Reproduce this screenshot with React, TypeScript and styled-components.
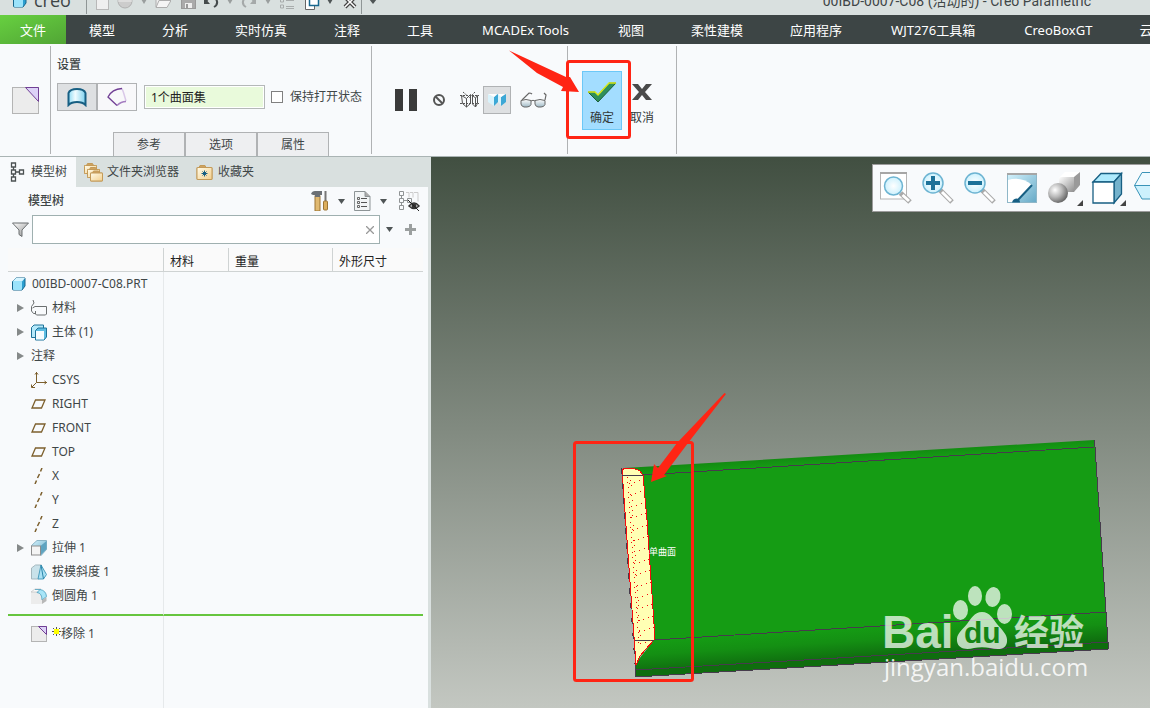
import React from 'react';
import styled, { createGlobalStyle } from 'styled-components';

const GlobalStyle = createGlobalStyle`
  * { box-sizing: border-box; }
  body {
    margin: 0;
    overflow: hidden;
    font-family: "Noto Sans", "Noto Sans CJK SC", sans-serif;
    font-size: 12px;
    line-height: 16px;
    color: #3f4647;
  }
  button, input { font: inherit; color: inherit; }
  button { border: 0; padding: 0; background: none; cursor: pointer; }
  svg { display: block; flex: none; }
`;

const Shell = styled.div`
  display: flex;
  flex-direction: column;
  height: 100vh;
  overflow: hidden;
  background: #f8fafc;
`;

/* ---------- title bar ---------- */
const TitleClip = styled.header`
  display: flex;
  align-items: flex-end;
  height: 15px;
  flex: none;
  overflow: hidden;
  background: #d9e0df;
`;
const TitleBar = styled.div`
  display: flex;
  align-items: center;
  flex: 1;
  height: 28px;
  padding-left: 12px;
`;
const Brand = styled.span`
  width: 52px;
  margin-left: 6px;
  padding-bottom: 2px;
  font-family: "Open Sans", sans-serif;
  font-size: 18px;
  line-height: 24px;
`;
const QuickTools = styled.div`
  display: flex;
  align-items: center;
  height: 26px;
  width: 275px;
  padding-left: 8px;
  border-left: 1px solid #8f9696;
`;
const QuickButton = styled.button<{ $w: number }>`
  display: flex;
  flex: none;
  justify-content: center;
  width: ${(p) => p.$w}px;
`;
const MoreTools = styled.button`
  display: flex;
  align-items: center;
  height: 26px;
  padding-left: 7px;
  border-left: 1px solid #8f9696;
`;
const WindowTitle = styled.h1`
  margin: 0 59px 0 auto;
  font-family: Roboto, "Noto Sans CJK SC", sans-serif;
  font-size: 14px;
  font-weight: 400;
  line-height: 20px;
  white-space: nowrap;
`;

/* ---------- menu ---------- */
const Menu = styled.nav`
  display: flex;
  flex: none;
  height: 29px;
  overflow: hidden;
  background: #3d4545;
`;
const MenuLink = styled.a<{ $file?: boolean; $roomy?: boolean }>`
  flex: none;
  padding: ${(p) => (p.$file ? '0 20px' : p.$roomy ? '0 26px 0 25px' : '0 24px 0 23px')};
  background: ${(p) => (p.$file ? 'linear-gradient(160deg, #67d040, #51a535)' : 'none')};
  color: #fff;
  font-size: 13px;
  line-height: 30px;
  white-space: nowrap;
  text-decoration: none;
`;

/* ---------- ribbon ---------- */
const Ribbon = styled.section`
  display: flex;
  flex: none;
  height: 113px;
  padding-top: 2px;
  border-bottom: 1px solid #aab4b4;
  background: #f8fafc;
`;
const RibbonGroup = styled.div<{ $w: number }>`
  position: relative;
  display: flex;
  flex: none;
  width: ${(p) => p.$w}px;
  &::after {
    content: "";
    width: 1px;
    height: 108px;
    margin-left: auto;
    background: #b0b2b4;
  }
`;
const FeatureButton = styled.button`
  height: 28px;
  margin: 40px 0 0 12px;
`;
const Settings = styled.div`
  display: flex;
  flex-direction: column;
  padding-left: 6px;
`;
const GroupTitle = styled.h2`
  margin: 11px 0 10px;
  font-size: 12px;
  font-weight: 500;
  line-height: 16px;
`;
const SettingsRow = styled.div`
  display: flex;
  align-items: center;
  height: 28px;
`;
const Toggle = styled.button<{ $on?: boolean }>`
  display: flex;
  align-items: center;
  justify-content: center;
  width: 40px;
  height: 28px;
  border: 1px solid #b0b2b4;
  background: ${(p) => (p.$on ? '#dee0e2' : '#f8f8fa')};
`;
const SurfaceInput = styled.input`
  width: 121px;
  height: 24px;
  margin: 0 6px 0 7px;
  padding: 0 6px;
  border: 1px solid #b4b8b8;
  outline: 0;
  background: #e9fadb;
  box-shadow: inset 0 0 0 1px #fff;
  color: #222;
`;
const CheckLabel = styled.label`
  display: flex;
  align-items: center;
  gap: 7px;
  white-space: nowrap;
`;
const Check = styled.input`
  appearance: none;
  width: 12px;
  height: 12px;
  margin: 0;
  border: 1px solid #808080;
  background: #fff;
`;
const RibbonTabs = styled.div`
  display: flex;
  margin: auto 0 0 56px;
`;
const RibbonTab = styled.button`
  width: 72px;
  height: 24px;
  border: 1px solid #b0b2b4;
  border-bottom: 0;
  background: #eeeff1;
`;
const ToolRow = styled.div`
  display: flex;
  align-items: center;
  gap: 5px;
  height: 28px;
  margin: 40px 0 0 22px;
`;
const RibbonTool = styled.button<{ $w: number; $on?: boolean }>`
  display: flex;
  align-items: center;
  justify-content: center;
  width: ${(p) => p.$w}px;
  height: 28px;
  border: 1px solid ${(p) => (p.$on ? '#b0b2b4' : 'transparent')};
  background: ${(p) => (p.$on ? '#dee0e2' : 'none')};
`;
const Decision = styled.button<{ $primary?: boolean }>`
  display: flex;
  flex-direction: column;
  align-items: center;
  justify-content: flex-end;
  width: 40px;
  height: 59px;
  margin: 25px 0 0 ${(p) => (p.$primary ? 14 : 0)}px;
  padding-bottom: 3px;
  gap: 7px;
  border: 1px solid ${(p) => (p.$primary ? '#6cc8f7' : 'transparent')};
  background: ${(p) => (p.$primary ? '#a3ddff' : 'none')};
  color: #33393a;
`;
const ConfirmMark = styled.svg`
  position: absolute;
  left: -60px;
  top: 2px;
  pointer-events: none;
`;

/* ---------- work area ---------- */
const Work = styled.main`
  display: flex;
  flex: 1;
  min-height: 0;
`;
const Sidebar = styled.aside`
  display: flex;
  flex-direction: column;
  flex: none;
  width: 431px;
  background: #f8fafc;
`;
const SideTabs = styled.div`
  display: flex;
  flex: none;
  height: 30px;
  background: #d9e0df;
`;
const SideTab = styled.button<{ $on?: boolean }>`
  display: flex;
  align-items: center;
  gap: ${(p) => (p.$on ? 6 : 4)}px;
  padding: 0 9px 0 8px;
  background: ${(p) => (p.$on ? '#f8fafc' : 'none')};
  white-space: nowrap;
`;
const Panel = styled.div`
  display: flex;
  flex-direction: column;
  flex: 1;
  min-height: 0;
  padding: 0 5px 0 8px;
  border-right: 3px solid #d9e0df;
`;
const PanelHead = styled.div`
  display: flex;
  align-items: center;
  height: 28px;
  padding-left: 20px;
`;
const PanelTitle = styled.h2`
  margin: 0 auto 0 0;
  font-size: 12px;
  font-weight: 500;
`;
const IconButton = styled.button<{ $w: number }>`
  display: flex;
  justify-content: center;
  width: ${(p) => p.$w}px;
`;
const SearchRow = styled.div`
  display: flex;
  align-items: center;
  height: 29px;
`;
const SearchBox = styled.div`
  display: flex;
  align-items: center;
  width: 348px;
  height: 29px;
  border: 1px solid #9fb0b0;
  background: #fff;
`;
const SearchInput = styled.input`
  flex: 1;
  height: 26px;
  border: 0;
  outline: 0;
  background: none;
`;
const TreeWrap = styled.div`
  flex: 1;
  min-height: 0;
  padding-top: 4px;
`;
const Tree = styled.table`
  width: 100%;
  height: 100%;
  border-collapse: separate;
  border-spacing: 0;
  table-layout: fixed;
`;
const HeadCell = styled.th<{ $w?: number }>`
  width: ${(p) => (p.$w ? `${p.$w}px` : 'auto')};
  height: 24px;
  padding: 5px 0 0 6px;
  border-bottom: 1px solid #cfd3d3;
  background: #fafafa;
  color: #222;
  font-weight: 400;
  text-align: left;
  & + & { border-left: 1px solid #cfd3d3; }
`;
const Cell = styled.td<{ $h?: number; $mark?: boolean }>`
  height: ${(p) => (p.$h ? `${p.$h}px` : 'auto')};
  padding: 0;
  border-bottom: ${(p) => (p.$mark ? '2px solid #67c53f' : '0')};
  &:nth-child(2) { border-left: 1px solid #e6e9eb; }
`;
const Node = styled.div<{ $root?: boolean }>`
  display: flex;
  align-items: center;
  padding-left: ${(p) => (p.$root ? 3 : 8)}px;
  white-space: nowrap;
`;
const Expander = styled.span`
  display: flex;
  width: 15px;
`;
const NodeIcon = styled.span`
  display: flex;
  width: 21px;
`;

/* ---------- graphics view ---------- */
const View = styled.section`
  position: relative;
  flex: 1;
  min-width: 0;
  overflow: hidden;
  background: linear-gradient(#414f41, #c3c7c1);
`;
const Scene = styled.svg`
  width: 100%;
  height: 100%;
`;
const ViewTools = styled.div`
  position: absolute;
  top: 7px;
  right: 0;
  display: flex;
  align-items: center;
  gap: 6px;
  width: 278px;
  height: 48px;
  padding-left: 7px;
  overflow: hidden;
  border: 1px solid #9c9c9c;
  border-right: 0;
  background: #f8fafc;
`;
const ViewTool = styled.button`
  flex: none;
  width: 36px;
  height: 34px;
`;

/* ---------- icons ---------- */
const Caret = ({ c = '#4f5556', w = 8 }: { c?: string; w?: number }) => (
  <svg width={w} height="5" viewBox="0 0 8 5" preserveAspectRatio="none"><path d="M0 0h8L4 5z" fill={c} /></svg>
);
const Cube = () => (
  <svg width="16" height="16" viewBox="0 0 16 16">
    <path d="M1.500 5.500L5 2h9v8l-3 4H2.500a1 1 0 0 1-1-1z" fill="#2c9fd0" stroke="#17678e" />
    <path d="M1.500 5.500L5 2h9l-3 3.500z" fill="#d6f5ff" />
    <rect x="2" y="5" width="9" height="9" rx="1" fill="#9be3fb" />
  </svg>
);
const PurpleFold = ({ s }: { s: number }) => (
  <svg width={s} height={s} viewBox={`0 0 ${s} ${s}`}>
    <rect x=".5" y=".5" width={s - 1} height={s - 1} fill="#ececec" stroke="#b4b4b4" />
    <path d={`M${Math.round(s / 2) - 1}.5 .5H${s - 1}.500V${Math.round(s / 2)}.500z`} fill="#dcd2f7" stroke="#713f95" />
  </svg>
);
const Lens = ({ kind }: { kind: 'fit' | 'in' | 'out' }) => {
  const fit = kind === 'fit';
  const cx = fit ? 13.5 : 11;
  const cy = fit ? 15 : 12;
  const r = fit ? 9 : 10;
  return (
    <svg width="36" height="34" viewBox="0 0 36 34">
      {fit && <><rect x=".5" y="2" width="26" height="26" fill="#fff" stroke="#b5b5b5" /><path d="M0 2h27" stroke="#a6a6a6" strokeWidth="2" /></>}
      <path d={`M${cx + 7} ${cy + 7}L30 31`} stroke="#a9a9a9" strokeWidth="5" />
      <path d={`M${cx + 9} ${cy + 9}L29 30`} stroke="#fff" strokeWidth="3" />
      <circle cx={cx} cy={cy} r={r} fill="url(#lensFill)" stroke="#6db4d2" strokeWidth="1.500" />
      {!fit && <path d={`M${cx - 7} ${cy}h14`} stroke="#1d7299" strokeWidth="4" />}
      {kind === 'in' && <path d={`M${cx} ${cy - 7}v14`} stroke="#1d7299" strokeWidth="4" />}
    </svg>
  );
};
const Defs = () => (
  <svg width="0" height="0" style={{ position: 'absolute' }}>
    <defs>
      <radialGradient id="lensFill"><stop offset="0" stopColor="#fff" /><stop offset="1" stopColor="#cdf1fd" /></radialGradient>
      <radialGradient id="ball" cx=".35" cy=".35" r=".7"><stop offset="0" stopColor="#fff" /><stop offset=".5" stopColor="#b9b9b9" /><stop offset="1" stopColor="#626262" /></radialGradient>
      <linearGradient id="box" x2="1" y2="1"><stop offset="0" stopColor="#fff" /><stop offset="1" stopColor="#8f8f8f" /></linearGradient>
      <linearGradient id="sky" x2="1" y2="1"><stop offset="0" stopColor="#d5f3fd" /><stop offset="1" stopColor="#66a9c6" /></linearGradient>
      <linearGradient id="gold" x2="1" y2="1"><stop offset="0" stopColor="#fffbe9" /><stop offset="1" stopColor="#f3cf8c" /></linearGradient>
      <linearGradient id="quilt"><stop offset="0" stopColor="#8fdcf5" /><stop offset=".4" stopColor="#f0fcff" /><stop offset="1" stopColor="#7ed1ee" /></linearGradient>
      <linearGradient id="lensGlass" x2="0" y2="1"><stop offset="0" stopColor="#fff" /><stop offset="1" stopColor="#9fb9c6" /></linearGradient>
    </defs>
  </svg>
);
const Folder = ({ x, y, w, h }: { x: number; y: number; w: number; h: number }) => (
  <g>
    <path d={`M${x} ${y + h}v-${h}h2l1-2h5l1 2h${w - 9}v${h}z`} fill="#cfa360" stroke="#c39a58" />
    <rect x={x} y={y} width={w} height={h} rx="1" fill="url(#gold)" stroke="#c39a58" />
  </g>
);

const icons: Record<string, React.ReactNode> = {
  material: (
    <svg width="17" height="16" viewBox="0 0 17 16" fill="none" stroke="#6b6f70">
      <path d="M2 0l1 3L.5 6.500v4.500l2 2.500H5M1.500 8L4 6.500h11.500v7.500l-1 1H5.500l-1-1V11" />
    </svg>
  ),
  body: (
    <svg width="17" height="17" viewBox="0 0 17 17" stroke="#1d7299">
      <path d="M.5 3.500L3 1h9.500v9l-3 3.500h-9z" fill="#b5e9fa" />
      <path d="M4.500 6.500L7 4h8.500v9L13 16H4.500z" fill="#5cbde2" />
      <path d="M5 7h8v8.500H5z" fill="#f4fcff" stroke="none" />
    </svg>
  ),
  csys: (
    <svg width="17" height="16" viewBox="0 0 17 16" fill="none" stroke="#7c5f2c">
      <path d="M5.500 0v10.500H16M5.500 10.500L1 15M4 2.500l1.500-2 1.500 2M13.500 9l2 1.500-2 1.500M.5 12.500v3H4" />
    </svg>
  ),
  plane: (
    <svg width="17" height="16" viewBox="0 0 17 16" fill="none" stroke="#7c5f2c" strokeWidth="1.300">
      <path d="M4.500 4h9.500l-3.500 8H1z" />
    </svg>
  ),
  axis: (
    <svg width="17" height="16" viewBox="0 0 17 16" stroke="#7c5f2c" strokeWidth="1.500">
      <path d="M11 0L9.500 3.500M8.500 6L6.500 10M5.500 12.500L4 16" />
    </svg>
  ),
  extrude: (
    <svg width="17" height="16" viewBox="0 0 17 16">
      <path d="M.5 5.500L6 .5h9.500v9l-5.500 6z" fill="url(#sky)" stroke="#8cb5c6" />
      <path d="M9.500 6l6-5v8l-6 6z" fill="#5fa4c1" />
      <rect x=".5" y="6" width="9" height="9" fill="#f4f4f4" stroke="#8d8d8d" />
    </svg>
  ),
  draft: (
    <svg width="17" height="16" viewBox="0 0 17 16">
      <path d="M.5 4l4-3h6v11l-3 3h-7z" fill="#c9e2ea" stroke="#a5b8bf" />
      <path d="M10 1l5.500 9.500-3 4.500H7z" fill="#a9e1f4" stroke="#4a9dbd" />
      <path d="M10 1l2.500 14" stroke="#2a86ab" />
    </svg>
  ),
  round: (
    <svg width="17" height="16" viewBox="0 0 17 16">
      <path d="M0 4h7q4 1 4 6v6H0z" fill="#ececec" />
      <path d="M0 4l4-3h6L7 4z" fill="#fafafa" stroke="#bbb" strokeWidth=".6" />
      <path d="M4 1.500h5q6 1 6.500 7L11 12Q11 5 6 4.500L9 1.500" fill="#a8e5f8" stroke="#4a9dbd" strokeWidth=".8" />
      <path d="M11 12l4.500-3v4L11 16z" fill="#b8b8b8" />
    </svg>
  ),
};

type TreeItem = { name: string; icon?: string; open?: boolean };
const items: TreeItem[] = [
  { name: '材料', icon: 'material', open: true },
  { name: '主体 (1)', icon: 'body', open: true },
  { name: '注释', open: true },
  { name: 'CSYS', icon: 'csys' },
  { name: 'RIGHT', icon: 'plane' },
  { name: 'FRONT', icon: 'plane' },
  { name: 'TOP', icon: 'plane' },
  { name: 'X', icon: 'axis' },
  { name: 'Y', icon: 'axis' },
  { name: 'Z', icon: 'axis' },
  { name: '拉伸 1', icon: 'extrude', open: true },
  { name: '拔模斜度 1', icon: 'draft' },
  { name: '倒圆角 1', icon: 'round' },
];
const menuItems = ['模型', '分析', '实时仿真', '注释', '工具', 'MCADEx Tools', '视图', '柔性建模', '应用程序', 'WJT276工具箱', 'CreoBoxGT', '云应用'];
const roomyItems = ['MCADEx Tools', 'WJT276工具箱'];

const Row = ({ h, mark, children }: { h?: number; mark?: boolean; children?: React.ReactNode }) => (
  <tr>
    <Cell $h={h} $mark={mark}>{children}</Cell>
    <Cell $mark={mark} /><Cell $mark={mark} /><Cell $mark={mark} />
  </tr>
);

/* Mesh points shown on the highlighted surface. */
const meshDots: [number, number][] = [];
for (let i = 0; i < 15; i++) {
  const y = 483 + i * 11.4;
  const x = 629 + i * 0.75;
  [[0, 0], [5, -1], [10, -3], [14, -4]].forEach(([dx, dy]) => meshDots.push([Math.round(x + dx), Math.round(y + dy)]));
}
for (let i = 0; i < 34; i++) {
  const y = 477 + i * 5;
  meshDots.push([Math.round(627 + i * 0.34), y]);
  if (i % 3) meshDots.push([Math.round(630 + i * 0.3), y - 2]);
}

const Model = () => (
  <Scene viewBox="431 157 719 551" preserveAspectRatio="xMinYMin slice" role="img" aria-label="00IBD-0007-C08">
    <defs>
      <linearGradient id="fillet" gradientUnits="userSpaceOnUse" x1="800" y1="631" x2="802" y2="661">
        <stop offset="0" stopColor="#159c14" /><stop offset=".45" stopColor="#148f13" /><stop offset="1" stopColor="#0f6e0f" />
      </linearGradient>
      <linearGradient id="topFillet" gradientUnits="userSpaceOnUse" x1="800" y1="457" x2="800.5" y2="465">
        <stop offset="0" stopColor="#138a12" /><stop offset="1" stopColor="#159c14" />
      </linearGradient>
    </defs>
    <path d="M624 468L1094 440V447L643 475z" fill="url(#topFillet)" />
    <path d="M641 475L1095 447L1106 612L654 640z" fill="#159c14" />
    <path d="M654 640L1106 612L1108 642L635 670V664z" fill="url(#fillet)" />
    <path d="M635 670L1108 642V649L635 677z" fill="#0f6d0e" />
    <g fill="none" stroke="#463c4c" shapeRendering="crispEdges">
      <path d="M643 475L1094 447M654 640L1106 612M635 670L1108 642M635 677L1108 649" />
      <path d="M1094 440L1095 447L1106 612L1108 642V649M635 664V677" />
    </g>
    <path d="M622 470L625 468H633L640 471L643 475L647 520L655 639L645 650L640 656L636 665z" fill="#ffffb4" stroke="#f40b0b" shapeRendering="crispEdges" />
    <path d="M622 475H643M635 641L654 640" stroke="#463c4c" shapeRendering="crispEdges" />
    <path d="M621 468L635 664" stroke="#463c4c" strokeDasharray="6 9" shapeRendering="crispEdges" />
    {meshDots.map(([x, y], i) => <rect key={i} x={x} y={y} width="1" height="1" fill="#f40b0b" />)}
    <text x="649" y="555" fill="#fff" fontSize="9" fontFamily="Noto Sans CJK SC, sans-serif">单曲面</text>
    <rect x="574.500" y="442.500" width="118" height="238" rx="2" fill="none" stroke="#ff2414" strokeWidth="3" />
    <path d="M724.500 393L726 394L688 443L664 475L667 476L651 482L654 464L658 468L677 443z" fill="#ff2414" />
    <g fill="#fff" fillOpacity=".72">
      <text x="882" y="648" fontSize="46" fontWeight="700" fontFamily="Liberation Sans, sans-serif">Bai</text>
      <ellipse cx="960.500" cy="610" rx="7.500" ry="10" />
      <ellipse cx="975" cy="596" rx="7" ry="10" />
      <ellipse cx="993" cy="597" rx="7.500" ry="10" transform="rotate(10 993 597)" />
      <ellipse cx="1004.500" cy="614" rx="7.500" ry="10" />
      <path d="M982 612C990 612 993 619 997 624C1002 630 1008 635 1007 642C1006 650 998 650 990 648C985 647 979 647 974 648C966 650 958 649 957 641C956 634 962 630 967 624C971 619 974 612 982 612z" />
      <text x="1014" y="645" fontSize="35" fontWeight="700" fontFamily="Noto Sans CJK SC, sans-serif">经验</text>
      <text x="884" y="676" fontSize="24" fillOpacity=".85" fontFamily="Open Sans, sans-serif">jingyan.baidu.com</text>
    </g>
    <text x="964" y="643" fontSize="30" fontWeight="700" fill="#148514" fontFamily="Liberation Sans, sans-serif">du</text>
  </Scene>
);

export default function App() {
  return (
    <Shell>
      <GlobalStyle />
      <Defs />
      <TitleClip>
        <TitleBar>
          <Cube />
          <Brand>creo</Brand>
          <QuickTools>
            <QuickButton $w={14} aria-label="新建"><svg width="13" height="18"><rect x=".5" y=".5" width="12" height="17" fill="#efefef" stroke="#b8b8b8" /></svg></QuickButton>
            <QuickButton $w={32} aria-label="发布"><svg width="16" height="18"><circle cx="8" cy="9" r="7" fill="#ccc" stroke="#b0b0b0" /><path d="M1 9h14" stroke="#eee" /></svg></QuickButton>
            <QuickButton $w={6} aria-label="更多"><Caret c="#9a9e9e" w={6} /></QuickButton>
            <QuickButton $w={32} aria-label="打开"><svg width="16" height="16"><path d="M1 14V3h5l1 2h6v3" fill="#eee" stroke="#adadad" /><path d="M1 14.500l3-7h12l-4 7z" fill="#f4f4f4" stroke="#adadad" /></svg></QuickButton>
            <QuickButton $w={18} aria-label="保存"><svg width="15" height="16"><rect x=".5" y=".5" width="14" height="15" fill="#aaa" stroke="#999" /><rect x="3" y="1" width="9" height="6" fill="#f2f2f2" /><rect x="4" y="10" width="7" height="5" fill="#eee" /><path d="M5 11h2v4H5z" fill="#999" /></svg></QuickButton>
            <QuickButton $w={28} aria-label="撤消"><svg width="16" height="14" fill="none" stroke="#454b4c" strokeWidth="2"><path d="M3 7q5-6 10-2 3 5-2 8" /><path d="M1 3v7h6z" fill="#454b4c" stroke="none" /></svg></QuickButton>
            <QuickButton $w={10} aria-label="撤消列表"><Caret c="#9a9e9e" w={6} /></QuickButton>
            <QuickButton $w={28} aria-label="重做"><svg width="16" height="14" fill="none" stroke="#a5a9a9" strokeWidth="2"><path d="M13 7Q8 1 3 5q-3 5 2 8" /><path d="M15 3v7H9z" fill="#a5a9a9" stroke="none" /></svg></QuickButton>
            <QuickButton $w={10} aria-label="重做列表"><Caret c="#9a9e9e" w={6} /></QuickButton>
            <QuickButton $w={28} aria-label="重新生成"><svg width="15" height="18" fill="none" stroke="#a8acac"><path d="M6 2.500h8M6 8.500h8M6 14.500h8M6 16.500h8" /><path d="M.5 1h3v3h-3zM.5 7h3v3h-3zM.5 13h3v3h-3z" /></svg></QuickButton>
            <QuickButton $w={22} aria-label="窗口"><svg width="15" height="20"><path d="M.5 8.500h9v10h-9z" fill="#fff" stroke="#666" /><path d="M4.500 3.500h9v11h-9z" fill="#fff" stroke="#17678e" strokeWidth="1.500" /></svg></QuickButton>
            <QuickButton $w={14} aria-label="窗口列表"><Caret w={6} /></QuickButton>
            <QuickButton $w={26} aria-label="关闭"><svg width="14" height="16"><path d="M2 4l10 10M12 4L2 14" stroke="#444" strokeWidth="4" /><path d="M2 4l10 10M12 4L2 14" stroke="#fff" strokeWidth="1.500" /></svg></QuickButton>
          </QuickTools>
          <MoreTools aria-label="自定义"><Caret w={8} /></MoreTools>
          <WindowTitle>00IBD-0007-C08 (活动的) - Creo Parametric</WindowTitle>
        </TitleBar>
      </TitleClip>

      <Menu>
        <MenuLink href="#file" $file>文件</MenuLink>
        {menuItems.map((m) => <MenuLink key={m} href={`#${m}`} $roomy={roomyItems.includes(m)}>{m}</MenuLink>)}
      </Menu>

      <Ribbon>
        <RibbonGroup $w={51}>
          <FeatureButton aria-label="移除"><PurpleFold s={27} /></FeatureButton>
        </RibbonGroup>
        <RibbonGroup $w={321}>
          <Settings>
            <GroupTitle>设置</GroupTitle>
            <SettingsRow>
              <Toggle $on aria-label="移除曲面">
                <svg width="20" height="20" viewBox="0 0 20 20"><path d="M1.500 18V6Q3 2 10 2t8.500 4v12q-3-3-8.500-3t-8.500 3z" fill="url(#quilt)" stroke="#175f83" strokeWidth="2" /></svg>
              </Toggle>
              <Toggle aria-label="移除链">
                <svg width="20" height="20" viewBox="0 0 20 20" fill="#fff"><path d="M15 1.500l1.500 4L19 14" stroke="#d9c8e8" strokeWidth="1.500" /><path d="M10 18.500L1 10Q5 2 15 1.500" stroke="#713f95" strokeWidth="1.300" fill="none" /><path d="M10 18.500q4-4 9-4" stroke="#a47cc0" strokeWidth="1.300" fill="none" /></svg>
              </Toggle>
              <SurfaceInput aria-label="曲面集" defaultValue="1个曲面集" />
              <CheckLabel><Check type="checkbox" />保持打开状态</CheckLabel>
            </SettingsRow>
            <RibbonTabs>
              <RibbonTab>参考</RibbonTab><RibbonTab>选项</RibbonTab><RibbonTab>属性</RibbonTab>
            </RibbonTabs>
          </Settings>
        </RibbonGroup>
        <RibbonGroup $w={196}>
          <ToolRow>
            <RibbonTool $w={24} aria-label="暂停"><svg width="24" height="22"><path d="M1 0h8v22H1zM15 0h8v22h-8z" fill="#3a3a3a" /></svg></RibbonTool>
            <RibbonTool $w={32} aria-label="无预览"><svg width="12" height="12" fill="none" stroke="#555" strokeWidth="2"><circle cx="6" cy="6" r="5" /><path d="M2.500 2.500l7 7" /></svg></RibbonTool>
            <RibbonTool $w={18} aria-label="分离"><svg width="19" height="18" viewBox="0 0 19 18" fill="none" stroke="#555"><path d="M1.500 4.500l5 3v8.500l-4-3.500zM6.500 7.500l4-4v9l-4 3.500M12.500 4.500v8.500l3 3v-9zM15.500 7l2-2.500v8l-2 3.500" /><path d="M0 4.500h19M3 1l4 3.500M15 1L9 7M0 12.500h19" strokeDasharray="2 1" /></svg></RibbonTool>
            <RibbonTool $w={28} $on aria-label="连接"><svg width="20" height="16" viewBox="0 0 20 16"><path d="M1 2l6 3v9l-6-4zM11 2l4 3v9l-4-4z" fill="#d9f3fc" /><path d="M7 5l4-3v8l-4 4zM14 5l5-3v8l-5 4z" fill="#3da8d6" /><path d="M1 2h5l4 0-3 3zM11 2h7l-4 3z" fill="#fff" /></svg></RibbonTool>
            <RibbonTool $w={34} aria-label="验证"><svg width="27" height="16" viewBox="0 0 27 16" stroke="#666" fill="url(#lensGlass)"><path d="M2 8L9 1q2 0 3 1M25 8l1-5-2-2" fill="none" strokeWidth="1.200" /><path d="M1 8.500q5-2 10 0v4q-1 2.500-4 2.500H4q-3-1-3-3zM15 8.500q5-2 10 0v4q-1 2.500-4 2.500h-3q-3-1-3-3zM11 9q2-1.500 4 0" /></svg></RibbonTool>
          </ToolRow>
        </RibbonGroup>
        <RibbonGroup $w={109}>
          <Decision $primary>
            <svg width="30" height="22" viewBox="0 0 30 22"><path d="M1 11h7l3 3L22 2h7L11 21z" fill="#2f8f5b" stroke="#1d5f3c" /><path d="M1 11h7l3 3L22 2h7" fill="none" stroke="#d8ea1a" strokeWidth="1.500" /></svg>
            确定
          </Decision>
          <Decision>
            <svg width="20" height="22" viewBox="0 0 20 22"><path d="M0 3h6l4 5 4-5h6l-7 8 7 8h-6l-4-5-4 5H0l7-8z" fill="#4a4a4a" /></svg>
            取消
          </Decision>
          <ConfirmMark width="126" height="94" viewBox="508 48 126 94">
            <rect x="567.500" y="61.500" width="62" height="76" rx="2" fill="none" stroke="#ff2414" strokeWidth="3" />
            <path d="M509 50.500L566 77L570 77L579 92L561 91L563 87L537 73z" fill="#ff2414" />
          </ConfirmMark>
        </RibbonGroup>
      </Ribbon>

      <Work>
        <Sidebar>
          <SideTabs>
            <SideTab $on>
              <svg width="17" height="20" viewBox="0 0 17 20" fill="none" stroke="#4b5152" strokeWidth="1.300"><path d="M3.500 1h4v4h-4zM3.500 8h4v4h-4zM3.500 15h4v4h-4zM11.500 8h4v4h-4zM5.500 5v3M5.500 12v3M7.500 10h4" /></svg>
              模型树
            </SideTab>
            <SideTab>
              <svg width="19" height="20" viewBox="0 0 19 20"><Folder x={.5} y={3.5} w={12} h={8} /><Folder x={3.500} y={7.500} w={12} h={8} /><Folder x={6.500} y={11} w={12} h={8} /></svg>
              文件夹浏览器
            </SideTab>
            <SideTab>
              <svg width="18" height="18" viewBox="0 0 18 18"><Folder x={1} y={4.500} w={15} h={12} /><path d="M8.500 7.500v6M5.500 10.500h6M6.500 8.500l4 4M10.500 8.500l-4 4" stroke="#175f83" /></svg>
              收藏夹
            </SideTab>
          </SideTabs>
          <Panel>
            <PanelHead>
              <PanelTitle>模型树</PanelTitle>
              <IconButton $w={18} aria-label="设置">
                <svg width="18" height="20" viewBox="0 0 18 20"><rect x="4" y="5" width="5" height="15" fill="#e0b971" stroke="#9c7535" /><path d="M0 3q1-3 4-3h7v4H9v2H4V4H2z" fill="#6b7075" /><path d="M14.500 0v10" stroke="#777" strokeWidth="2" /><rect x="12.500" y="10" width="4" height="9" rx="1" fill="#dcae5d" stroke="#9c7535" /></svg>
              </IconButton>
              <IconButton $w={24} aria-label="设置列表"><Caret w={7} /></IconButton>
              <IconButton $w={18} aria-label="显示">
                <svg width="17" height="20" viewBox="0 0 17 20"><path d="M.5.5H11l5 5v14H.5z" fill="#f2f5f6" stroke="#8d9496" /><path d="M11 .5v5h5" fill="#aaa" stroke="#8d9496" /><path d="M7 7.500h6M7 11.500h6M7 15.500h6" stroke="#555" /><path d="M3.500 6.500h2v2h-2zM3.500 10.500h2v2h-2zM3.500 14.500h2v2h-2z" fill="none" stroke="#666" /></svg>
              </IconButton>
              <IconButton $w={24} aria-label="显示列表"><Caret w={7} /></IconButton>
              <IconButton $w={28} aria-label="隐藏">
                <svg width="22" height="20" viewBox="0 0 22 20" fill="none" stroke="#8f9394"><path d="M1.500.5h4v4h-4zM1.500 7.500h4v4h-4zM1.500 14.500h4v4h-4zM9.500 7.500h4v4h-4zM3.500 4.500v3M3.500 11.500v3M5.500 9.500h4" /><path d="M8 1.500h3v5M12 1.500h3v5M16 1.500h4v9" stroke="#ccc" /><path d="M11 15q5-6 10 0-5 5-10 0z" fill="#fff" stroke="#333" strokeWidth="1.500" /><circle cx="16" cy="15" r="2.500" fill="#333" stroke="none" /><path d="M10 9l11 11" stroke="#222" /></svg>
              </IconButton>
            </PanelHead>
            <SearchRow>
              <IconButton $w={24} aria-label="过滤器">
                <svg width="17" height="16" viewBox="0 0 17 16"><path d="M.5 1h16L10 8v6.500L7 12.500V8z" fill="url(#box)" stroke="#6b6f70" /></svg>
              </IconButton>
              <SearchBox>
                <SearchInput aria-label="搜索模型树" />
                <IconButton $w={18} aria-label="清除"><svg width="8" height="8" stroke="#999" strokeWidth="1.300"><path d="M0 0l8 8M8 0L0 8" /></svg></IconButton>
              </SearchBox>
              <IconButton $w={18} aria-label="搜索选项"><Caret w={7} /></IconButton>
              <IconButton $w={24} aria-label="添加"><svg width="11" height="11"><path d="M4 0h3v4h4v3H7v4H4V7H0V4h4z" fill="#9b9f9f" /></svg></IconButton>
            </SearchRow>
            <TreeWrap>
              <Tree>
                <thead>
                  <tr><HeadCell $w={155} aria-label="名称" /><HeadCell $w={65}>材料</HeadCell><HeadCell $w={104}>重量</HeadCell><HeadCell>外形尺寸</HeadCell></tr>
                </thead>
                <tbody>
                  <Row h={24}><Node $root><NodeIcon><Cube /></NodeIcon>00IBD-0007-C08.PRT</Node></Row>
                  {items.map((it) => (
                    <Row key={it.name} h={24}>
                      <Node>
                        <Expander>{it.open && <svg width="8" height="10"><path d="M1 1l7 4-7 4z" fill="#858989" /></svg>}</Expander>
                        {it.icon && <NodeIcon>{icons[it.icon]}</NodeIcon>}
                        {it.name}
                      </Node>
                    </Row>
                  ))}
                  <Row h={8} mark />
                  <Row h={36}>
                    <Node><Expander /><NodeIcon><PurpleFold s={16} /></NodeIcon>
                      <svg width="9" height="14" viewBox="0 0 9 14"><path d="M4.500 0v9M0 4.500h9M1 1l7 7M8 1L1 8" stroke="#555" /><rect x="2" y="2" width="5" height="5" fill="#ff0" /></svg>
                      移除 1
                    </Node>
                  </Row>
                  <Row />
                </tbody>
              </Tree>
            </TreeWrap>
          </Panel>
        </Sidebar>

        <View>
          <Model />
          <ViewTools>
            <ViewTool aria-label="重新调整"><Lens kind="fit" /></ViewTool>
            <ViewTool aria-label="放大"><Lens kind="in" /></ViewTool>
            <ViewTool aria-label="缩小"><Lens kind="out" /></ViewTool>
            <ViewTool aria-label="重画">
              <svg width="36" height="34" viewBox="0 0 36 34"><rect x="1.500" y="2.500" width="29" height="29" fill="url(#sky)" stroke="#8fb7c8" /><path d="M2 9q13-4 24 5L11 31H2z" fill="#fff" /><path d="M26 14L11 30" stroke="#175f83" strokeWidth="2" /><path d="M6 31.500q1-4 5-4 3 1 3 4z" fill="#175f83" /><path d="M1 3h30" stroke="#a6a6a6" strokeWidth="2" /></svg>
            </ViewTool>
            <ViewTool aria-label="显示样式">
              <svg width="36" height="36" viewBox="0 0 36 36"><path d="M11 7l6-6h15l-6 6z" fill="#fff" /><path d="M11 6h15v15H11z" fill="url(#box)" /><path d="M26 6l6-5v13l-6 7z" fill="#9a9a9a" /><circle cx="10" cy="22" r="10" fill="url(#ball)" /><path d="M35 29v6h-6z" fill="#444" /></svg>
            </ViewTool>
            <ViewTool aria-label="已保存方向">
              <svg width="36" height="36" viewBox="0 0 36 36" stroke="#175f83" strokeWidth="1.300"><path d="M3 11l8-8.500h20.500L24 11z" fill="#aeeafd" /><path d="M24 11l7.500-8.500V23L24 32z" fill="#74b2cc" /><path d="M3 11h21v21H3z" fill="#fff" /><path d="M36 29v6h-6z" fill="#444" stroke="none" /></svg>
            </ViewTool>
            <ViewTool aria-label="视图管理器">
              <svg width="36" height="34" viewBox="0 0 36 34" stroke="#3a94b8" fill="#cdf1fd"><path d="M2.500 14.500L10 1.500h18l7 13z" fill="#eefaff" /><path d="M2.500 14.500L10 28h18l7-13.500z" /></svg>
            </ViewTool>
          </ViewTools>
        </View>
      </Work>
    </Shell>
  );
}
